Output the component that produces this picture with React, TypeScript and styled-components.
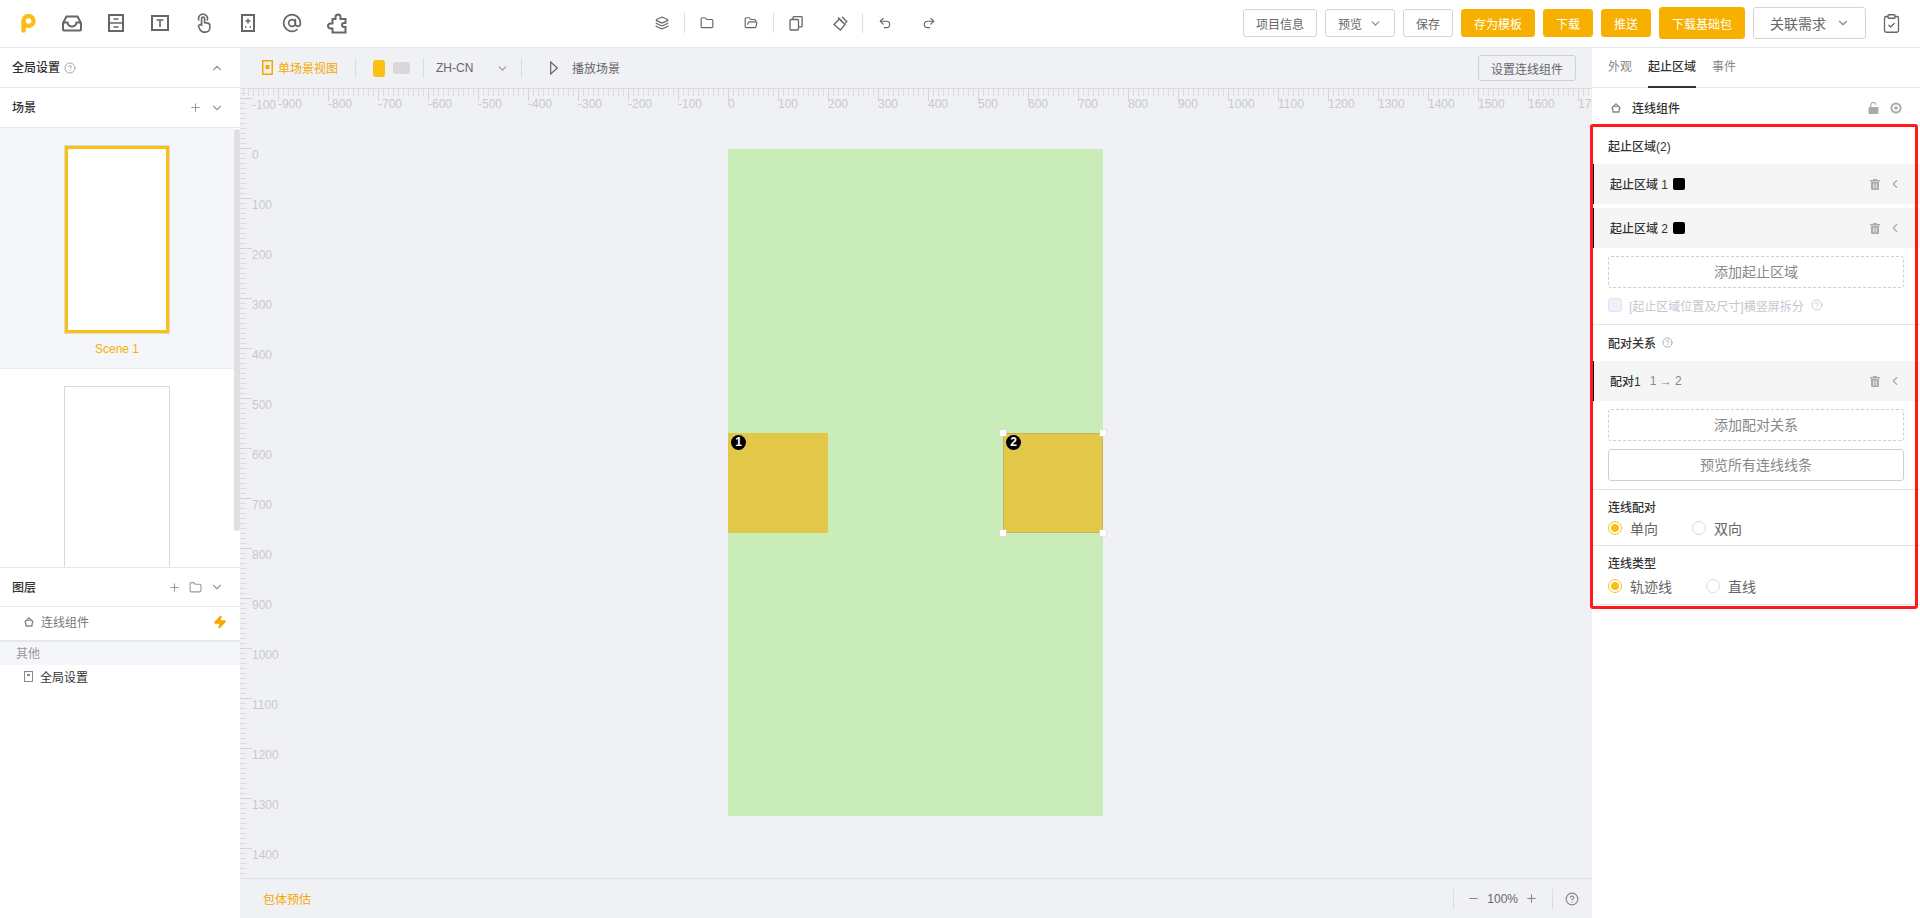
import styled, { createGlobalStyle } from "styled-components";
import {
  AtSign,
  ChevronDown,
  ChevronLeft,
  ChevronUp,
  CircleHelp,
  ClipboardCheck,
  Folder,
  FolderOpen,
  Layers,
  Minus,
  Plus,
  Redo2,
  Undo2,
  Zap,
} from "lucide-react";

const FONT = `"Liberation Sans", "Noto Sans CJK SC", sans-serif`;

const GlobalStyle = createGlobalStyle`
  html, body {
    margin: 0;
    padding: 0;
    height: 100%;
    overflow: hidden;
    background: #fff;
  }
  * { box-sizing: border-box; }
  #root {
    height: 100%;
    font-family: ${FONT};
    font-size: 12px;
    color: #333;
  }
`;

const Page = styled.div`
  width: 1920px;
  height: 918px;
  display: flex;
  flex-direction: column;
  overflow: hidden;
`;

/* top bar */
const TopBar = styled.header`
  height: 48px;
  flex: none;
  display: flex;
  align-items: center;
  padding: 0 18px 1px 6px;
  border-bottom: 1px solid #e6e7ea;
  background: #fff;
`;

const ToolGroup = styled.div`
  display: flex;
  align-items: center;
`;

const CenterTools = styled(ToolGroup)`
  margin-left: 282px;
`;

const ToolSlot = styled.div<{ $wide?: boolean; $divided?: boolean }>`
  position: relative;
  width: ${(p) => (p.$wide ? "44px" : "44.5px")};
  height: 24px;
  display: flex;
  align-items: center;
  justify-content: center;
  color: #666;
  &::after {
    content: "";
    display: ${(p) => (p.$divided ? "block" : "none")};
    position: absolute;
    right: 0;
    top: 2px;
    bottom: 2px;
    width: 1px;
    background: #dcdde0;
  }
`;

const TopActions = styled.div`
  margin-left: auto;
  display: flex;
  align-items: center;
  gap: 8px;
`;

const Btn = styled.button<{ $primary?: boolean; $big?: boolean }>`
  height: ${(p) => (p.$big ? "32px" : "28px")};
  padding: 0 12px;
  display: flex;
  align-items: center;
  gap: 7px;
  font-family: ${FONT};
  font-size: 12px;
  border-radius: 3px;
  cursor: pointer;
  border: 1px solid ${(p) => (p.$primary ? "#f7b000" : "#d4d4d4")};
  background: ${(p) => (p.$primary ? "#f7b000" : "#fff")};
  color: ${(p) => (p.$primary ? "#fff" : "#666")};
  svg {
    color: #888;
  }
`;

const SelectBtn = styled(Btn)`
  width: 113px;
  height: 32px;
  padding: 0 15px 0 16px;
  font-size: 14px;
  justify-content: space-between;
`;

const ClipSlot = styled.div`
  margin-left: 15px;
  display: flex;
  color: #666;
`;

const Body = styled.div`
  flex: 1;
  min-height: 0;
  display: flex;
`;

/* left panel */
const LeftPanel = styled.aside`
  width: 240px;
  flex: none;
  display: flex;
  flex-direction: column;
  background: #fff;
`;

const PanelHead = styled.div<{ $h?: number }>`
  height: ${(p) => p.$h ?? 40}px;
  flex: none;
  display: flex;
  align-items: center;
  padding: 0 16px 0 12px;
  border-bottom: 1px solid #e6e7ea;
  color: #999;
`;

const HeadTitle = styled.span`
  font-size: 12px;
  font-weight: 500;
  color: #333;
  margin: 0 4px 2px 0;
`;

const HeadActions = styled.div`
  margin-left: auto;
  display: flex;
  align-items: center;
  gap: 8px;
`;

const SceneList = styled.div`
  position: relative;
  height: 440px;
  flex: none;
  overflow: hidden;
  padding-right: 6px;
  border-bottom: 1px solid #e6e7ea;
`;

const SceneScroll = styled.div`
  position: absolute;
  top: 1px;
  right: 0;
  width: 6px;
  height: 402px;
  border-radius: 3px;
  background: #dfdfe4;
`;

const SceneItem = styled.div<{ $active?: boolean }>`
  height: 241px;
  padding-top: 17px;
  display: flex;
  flex-direction: column;
  align-items: center;
  background: ${(p) => (p.$active ? "#f5f6fa" : "#fff")};
  border-bottom: 1px solid #ececef;
`;

const SceneThumb = styled.div<{ $active?: boolean }>`
  width: 106px;
  height: 189px;
  flex: none;
  background: #fff;
  border: 1px solid #d9d9d9;
  box-shadow: ${(p) => (p.$active ? "inset 0 0 0 3px #fac014" : "none")};
`;

const SceneName = styled.div`
  margin-top: 8px;
  font-size: 12px;
  line-height: 14px;
  color: #f7b000;
`;

const LayerRow = styled.div<{ $border?: boolean; $h: number; $dark?: boolean }>`
  height: ${(p) => p.$h}px;
  flex: none;
  display: flex;
  align-items: center;
  padding: 0 13px ${(p) => (p.$dark ? 6 : 4)}px 24px;
  gap: 7px;
  color: ${(p) => (p.$dark ? "#333" : "#777")};
  border-bottom: ${(p) => (p.$border ? "2px solid #e6e7ea" : "none")};
`;

const OtherLabel = styled.div`
  height: 23px;
  flex: none;
  display: flex;
  align-items: center;
  padding: 0 0 2px 16px;
  color: #999;
  background: #f5f6fa;
`;

/* canvas */
const CanvasCol = styled.main`
  flex: 1;
  min-width: 0;
  display: flex;
  flex-direction: column;
  background: #f0f1f5;
`;

const CanvasBar = styled.div`
  height: 40px;
  flex: none;
  display: flex;
  align-items: center;
  padding: 0 16px 0 22px;
`;

const ViewTab = styled.div`
  display: flex;
  align-items: center;
  gap: 5px;
  color: #f7a800;
  margin-bottom: 1px;
`;

const VDivider = styled.div<{ $ml: number; $mr: number }>`
  width: 1px;
  height: 20px;
  margin: 0 ${(p) => p.$mr}px 0 ${(p) => p.$ml}px;
  background: #dcdde0;
`;

const OrientA = styled.div`
  width: 12px;
  height: 17px;
  border-radius: 3px;
  background: #fac014;
`;

const OrientB = styled.div`
  width: 17px;
  height: 12px;
  margin-left: 8px;
  border-radius: 3px;
  background: #d8d8d8;
`;

const BarText = styled.span`
  color: #666;
`;

const LangSelect = styled.div`
  display: flex;
  align-items: center;
  width: 73px;
  justify-content: space-between;
  color: #666;
  svg {
    color: #999;
  }
`;

const PlayBtn = styled.div`
  display: flex;
  align-items: center;
  gap: 14px;
  margin-left: 1px;
  color: #666;
  margin-bottom: 1px;
`;

const OutlineBtn = styled.button`
  margin-left: auto;
  width: 98px;
  height: 26px;
  padding: 0;
  font-family: ${FONT};
  font-size: 12px;
  color: #666;
  background: transparent;
  border: 1px solid #cfd0d3;
  border-radius: 3px;
`;

const Stage = styled.div`
  position: relative;
  flex: 1;
  min-height: 0;
  overflow: hidden;
`;

const RulerX = styled.div`
  position: absolute;
  top: 0;
  left: 0;
  right: 0;
  height: 24px;
  display: flex;
  padding-left: 38px;
  border-top: 1px solid #dcdcdf;
  background: repeating-linear-gradient(
      to right,
      #dcdcdf 0 1px,
      transparent 1px 5px
    )
    3px 0 / 100% 7px no-repeat;
`;

const XCell = styled.div`
  width: 50px;
  flex: none;
  height: 12px;
  border-left: 1px solid #d4d4d6;
  position: relative;
`;

const XLabel = styled.span`
  position: absolute;
  left: -1px;
  top: 9px;
  font-size: 12px;
  line-height: 12px;
  color: #c9c9cb;
  white-space: nowrap;
`;

const RulerY = styled.div`
  position: absolute;
  top: 0;
  left: 0;
  bottom: 0;
  width: 12px;
  padding-top: 10px;
  background: repeating-linear-gradient(
      to bottom,
      #dcdcdf 0 1px,
      transparent 1px 5px
    )
    0 0 / 6px 100% no-repeat;
`;

const YCell = styled.div`
  height: 50px;
  width: 12px;
  border-top: 1px solid #d4d4d6;
  position: relative;
`;

const YLabel = styled.span`
  position: absolute;
  left: 12px;
  top: 0;
  font-size: 12px;
  line-height: 12px;
  color: #c9c9cb;
  white-space: nowrap;
`;

const Artboard = styled.div`
  position: absolute;
  left: 488px;
  top: 61px;
  width: 375px;
  height: 667px;
  background: #caecb8;
`;

const Zone = styled.div<{ $x: number; $selected?: boolean }>`
  position: absolute;
  left: ${(p) => p.$x}px;
  top: 284px;
  width: 100px;
  height: 100px;
  background: #e2c749;
  box-shadow: ${(p) => (p.$selected ? "inset 0 0 0 1px rgba(170, 170, 110, 0.55)" : "none")};
`;

const ZoneBadge = styled.span`
  position: absolute;
  left: 3px;
  top: 2px;
  width: 15px;
  height: 15px;
  border-radius: 50%;
  background: #000;
  color: #fff;
  font-size: 12px;
  font-weight: 700;
  line-height: 15px;
  text-align: center;
`;

const Handle = styled.i<{ $x: "left" | "right"; $y: "top" | "bottom" }>`
  position: absolute;
  ${(p) => p.$x}: -3px;
  ${(p) => p.$y}: -3px;
  width: 6px;
  height: 6px;
  background: #fff;
  box-shadow: 0 0 0 0.5px #d8d8d0;
`;

const CanvasFoot = styled.footer`
  height: 40px;
  flex: none;
  display: flex;
  align-items: center;
  padding: 0 13px 0 23px;
  border-top: 1px solid #e0e1e4;
  color: #666;
`;

const FootLink = styled.span`
  color: #f7a800;
`;

const ZoomBox = styled.div`
  margin-left: auto;
  display: flex;
  align-items: center;
  color: #888;
`;

const ZoomValue = styled.span`
  color: #666;
  margin: 0 7px;
`;

/* right panel */
const RightPanel = styled.aside`
  width: 328px;
  flex: none;
  display: flex;
  flex-direction: column;
  background: #fff;
`;

const Tabs = styled.div`
  height: 40px;
  flex: none;
  display: flex;
  gap: 16px;
  padding-left: 16px;
  border-bottom: 1px solid #e6e7ea;
`;

const Tab = styled.div<{ $active?: boolean }>`
  height: 40px;
  padding-top: 10px;
  line-height: 18px;
  font-weight: ${(p) => (p.$active ? 500 : 400)};
  color: ${(p) => (p.$active ? "#333" : "#888")};
  border-bottom: 2px solid ${(p) => (p.$active ? "#333" : "transparent")};
`;

const CompRow = styled.div`
  height: 36px;
  flex: none;
  display: flex;
  align-items: center;
  padding: 3px 18px 0 19px;
  gap: 11px;
  color: #999;
`;

const CompName = styled.span`
  font-weight: 500;
  color: #333;
`;

const CompActions = styled.div`
  margin-left: auto;
  display: flex;
  align-items: center;
  gap: 11px;
`;

const FormArea = styled.div`
  position: relative;
  flex: 1;
`;

const RedFrame = styled.div`
  position: absolute;
  left: -2px;
  top: 0;
  width: 328px;
  height: 485px;
  border: 3px solid #ff1a1a;
  border-radius: 3px;
  pointer-events: none;
  z-index: 2;
`;

const Section = styled.section<{ $pb: number }>`
  padding-bottom: ${(p) => p.$pb}px;
  border-bottom: 1px solid #e4e5ea;
`;

const SectionTitle = styled.div<{ $h: number; $pt?: number }>`
  height: ${(p) => p.$h}px;
  padding: ${(p) => p.$pt ?? 0}px 16px 2px;
  display: flex;
  align-items: center;
  gap: 6px;
  font-weight: 500;
  color: #333;
  svg {
    color: #aaa;
  }
`;

const ListRow = styled.div`
  height: 40px;
  margin-bottom: 4px;
  display: flex;
  align-items: center;
  padding: 0 18px 0 16px;
  background: #f5f5f5;
  border-left: 2px solid #000;
`;

const RowName = styled.span`
  font-weight: 500;
  color: #333;
  margin-bottom: 2px;
`;

const Swatch = styled.span`
  width: 12px;
  height: 12px;
  margin-left: 5px;
  border-radius: 2px;
  background: #000;
`;

const PairInfo = styled.span`
  margin-left: 9px;
  color: #888;
  display: flex;
  align-items: center;
  gap: 2px;
  margin-bottom: 1px;
`;

const RowActions = styled.div`
  margin-left: auto;
  display: flex;
  align-items: center;
  gap: 8px;
  color: #aaa;
`;

const WideBtn = styled.button<{ $dashed?: boolean }>`
  display: block;
  width: 296px;
  height: 32px;
  margin: 8px 0 0 16px;
  padding: 0 0 2px;
  font-family: ${FONT};
  font-size: 14px;
  color: #888;
  background: #fff;
  border: 1px ${(p) => (p.$dashed ? "dashed" : "solid")} #cfcfcf;
  border-radius: 3px;
`;

const CheckRow = styled.label`
  margin: 10px 0 0 16px;
  height: 14px;
  display: flex;
  align-items: center;
  gap: 7px;
  color: #c3c6cf;
`;

const CheckBox = styled.span`
  width: 14px;
  height: 14px;
  border: 1px solid #dfe3ee;
  border-radius: 3px;
  background: #eef1fa;
`;

const FieldLabel = styled.div`
  padding: 8px 16px 0;
  line-height: 20px;
  font-weight: 500;
  color: #333;
`;

const RadioRow = styled.div<{ $mt: number }>`
  margin-top: ${(p) => p.$mt}px;
  height: 20px;
  padding-left: 16px;
  display: flex;
  align-items: center;
`;

const RadioItem = styled.span`
  display: flex;
  align-items: center;
  gap: 8px;
  margin-right: 34px;
  font-size: 14px;
  color: #666;
`;

const RadioDot = styled.span<{ $on?: boolean }>`
  width: 14px;
  height: 14px;
  border-radius: 50%;
  background: #fff;
  border: 1px solid ${(p) => (p.$on ? "#fac014" : "#dcdcdc")};
  display: flex;
  align-items: center;
  justify-content: center;
  &::after {
    content: "";
    display: ${(p) => (p.$on ? "block" : "none")};
    width: 8px;
    height: 8px;
    border-radius: 50%;
    background: #fac014;
  }
`;

/* drawn icons */
const Logo = () => (
  <svg width="15" height="19" viewBox="0 0 15 19" fill="none">
    <circle cx="7.5" cy="7" r="5" stroke="#fbbd18" strokeWidth="4.4" />
    <path d="M2.6 7v9.4" stroke="#fbbd18" strokeWidth="4.6" strokeLinecap="round" />
  </svg>
);

const InboxIcon = () => (
  <svg width="20" height="17" viewBox="0 0 20 17" fill="none" stroke="currentColor" strokeWidth="2">
    <path d="M4.5 1.5h11L19 8v6.500a1 1 0 0 1-1 1H2a1 1 0 0 1-1-1V8z" />
    <path d="M1 7.500h4.500c.5 2.500 2.300 4 4.500 4s4-1.500 4.500-4H19" />
  </svg>
);

const CabinetIcon = () => (
  <svg width="16" height="18" viewBox="0 0 16 18" fill="none" stroke="currentColor" strokeWidth="2">
    <rect x="1" y="1" width="14" height="16" />
    <path d="M1 9h14M5.500 5h5M5.500 13h5" strokeWidth="1.600" />
  </svg>
);

const TextBoxIcon = () => (
  <svg width="18" height="16" viewBox="0 0 18 16" fill="none" stroke="currentColor" strokeWidth="2">
    <rect x="1" y="1" width="16" height="14" />
    <path d="M5.500 5h7M9 5v7" strokeWidth="1.600" />
  </svg>
);

const TouchIcon = () => (
  <svg width="14" height="20" viewBox="0 0 14 20" fill="none" stroke="currentColor" strokeWidth="1.600">
    <path d="M2 7.500a4.500 4.500 0 1 1 8 0" />
    <path d="M4.600 12V5.500a1.500 1.500 0 0 1 3 0v4l3 .6a2.500 2.500 0 0 1 2.200 2.500v2.200a4.300 4.300 0 0 1-4.300 4.300h-1A4.300 4.300 0 0 1 3 16.500L1.500 13.300c-.4-1 1.800-2.300 3.100-1.300z" />
  </svg>
);

const DeviceIcon = () => (
  <svg width="14" height="18" viewBox="0 0 14 18" fill="none" stroke="currentColor" strokeWidth="2">
    <rect x="1" y="1" width="12" height="16" />
    <path d="M7 4.500v5M4.500 7h5" strokeWidth="1.500" />
    <path d="M4 13h1.500M8.500 13H10" strokeWidth="1.500" />
  </svg>
);

const PuzzleIcon = () => (
  <svg width="21" height="21" viewBox="0 0 21 21" fill="none" stroke="currentColor" strokeWidth="2">
    <path d="M6.500 6h3V4a2.500 2.500 0 0 1 5 0v2h5v4h-1.500a2 2 0 0 0 0 4h1.500v5.500h-13V15.500h-2a2.500 2.500 0 0 1 0-5h2z" />
  </svg>
);

const CopyIcon = () => (
  <svg width="14" height="15" viewBox="0 0 14 15" fill="none" stroke="currentColor" strokeWidth="1.300">
    <rect x="1" y="3.500" width="8.500" height="10.500" rx="1" />
    <path d="M4 3.500V1.500a.8.8 0 0 1 .8-.8h7.500a.8.8 0 0 1 .8.8V10a.8.8 0 0 1-.8.8H9.500" />
  </svg>
);

const BrushIcon = () => (
  <svg width="15" height="15" viewBox="0 0 15 15" fill="none" stroke="currentColor" strokeWidth="1.300">
    <path d="M1 8.500 6.500 3l5.500 5.500L7.500 14z" />
    <path d="M5 1.500 9.500 6M9 .8l4.800 4.800-2 2" />
  </svg>
);

const SceneViewIcon = () => (
  <svg width="11" height="15" viewBox="0 0 11 15" fill="none" stroke="#f7a800" strokeWidth="1.500">
    <rect x=".75" y=".75" width="9.500" height="13.500" />
    <rect x="3.500" y="5" width="4" height="4" fill="#f7a800" stroke="none" />
  </svg>
);

const PlayIcon = () => (
  <svg width="8" height="14" viewBox="0 0 8 14" fill="none" stroke="#666" strokeWidth="1.200">
    <path d="M.7 1v12L7.300 7z" />
  </svg>
);

const LinkIcon = () => (
  <svg width="10" height="10" viewBox="0 0 10 10" fill="none" stroke="#888" strokeWidth="1.400">
    <path d="M5 1 8.800 4.500 7.800 9H2.200L1.200 4.500z" />
    <path d="M3.500 3.500h3" strokeWidth="1" />
  </svg>
);

const PageIcon = () => (
  <svg width="9" height="11" viewBox="0 0 9 11" fill="none" stroke="#888" strokeWidth="1">
    <rect x=".5" y=".5" width="8" height="10" />
    <rect x="3" y="3" width="3" height="2" fill="#888" stroke="none" />
  </svg>
);

const TrashIcon = () => (
  <svg width="10" height="11" viewBox="0 0 10 11" fill="currentColor">
    <rect x="3" y="0" width="4" height="1.500" />
    <rect x="0" y="1" width="10" height="1.500" />
    <path d="M1 3h8v7a1 1 0 0 1-1 1H2a1 1 0 0 1-1-1zM3.300 4.500v5h1v-5zM5.700 4.500v5h1v-5z" fillRule="evenodd" />
  </svg>
);

const LockIcon = () => (
  <svg width="11" height="12" viewBox="0 0 11 12" fill="none">
    <path d="M2.800 5V3.200a2.500 2.500 0 0 1 5-.4" stroke="#aaa" strokeWidth="1.200" />
    <rect x=".5" y="5" width="10" height="7" rx="1" fill="#aaa" />
  </svg>
);

const EyeIcon = () => (
  <svg width="12" height="12" viewBox="0 0 12 12" fill="none">
    <circle cx="6" cy="6" r="4.600" stroke="#aaa" strokeWidth="2" />
    <circle cx="6" cy="6" r="1.800" fill="#aaa" />
  </svg>
);

const X_LABELS = Array.from({ length: 27 }, (_, i) => -900 + i * 100);
const Y_LABELS = Array.from({ length: 17 }, (_, i) => -100 + i * 100);

export default function App() {
  return (
    <Page>
      <GlobalStyle />
      <TopBar>
        <ToolGroup>
          <ToolSlot $wide><Logo /></ToolSlot>
          <ToolSlot $wide><InboxIcon /></ToolSlot>
          <ToolSlot $wide><CabinetIcon /></ToolSlot>
          <ToolSlot $wide><TextBoxIcon /></ToolSlot>
          <ToolSlot $wide><TouchIcon /></ToolSlot>
          <ToolSlot $wide><DeviceIcon /></ToolSlot>
          <ToolSlot $wide><AtSign size={20} strokeWidth={2} /></ToolSlot>
          <ToolSlot $wide><PuzzleIcon /></ToolSlot>
        </ToolGroup>
        <CenterTools>
          <ToolSlot $divided><Layers size={14} /></ToolSlot>
          <ToolSlot><Folder size={14} /></ToolSlot>
          <ToolSlot $divided><FolderOpen size={14} /></ToolSlot>
          <ToolSlot><CopyIcon /></ToolSlot>
          <ToolSlot $divided><BrushIcon /></ToolSlot>
          <ToolSlot><Undo2 size={14} /></ToolSlot>
          <ToolSlot><Redo2 size={14} /></ToolSlot>
        </CenterTools>
        <TopActions>
          <Btn>项目信息</Btn>
          <Btn>预览<ChevronDown size={13} /></Btn>
          <Btn>保存</Btn>
          <Btn $primary>存为模板</Btn>
          <Btn $primary>下载</Btn>
          <Btn $primary>推送</Btn>
          <Btn $primary $big>下载基础包</Btn>
          <SelectBtn>关联需求<ChevronDown size={14} /></SelectBtn>
        </TopActions>
        <ClipSlot><ClipboardCheck size={21} strokeWidth={1.5} /></ClipSlot>
      </TopBar>

      <Body>
        <LeftPanel>
          <PanelHead>
            <HeadTitle>全局设置</HeadTitle>
            <CircleHelp size={12} color="#aaa" />
            <HeadActions><ChevronUp size={14} /></HeadActions>
          </PanelHead>
          <PanelHead>
            <HeadTitle>场景</HeadTitle>
            <HeadActions><Plus size={13} /><ChevronDown size={14} /></HeadActions>
          </PanelHead>
          <SceneList>
            <SceneScroll />
            <SceneItem $active>
              <SceneThumb $active />
              <SceneName>Scene 1</SceneName>
            </SceneItem>
            <SceneItem>
              <SceneThumb />
            </SceneItem>
          </SceneList>
          <PanelHead $h={39}>
            <HeadTitle>图层</HeadTitle>
            <HeadActions><Plus size={13} /><Folder size={13} /><ChevronDown size={14} /></HeadActions>
          </PanelHead>
          <LayerRow $h={35} $border>
            <LinkIcon />
            <span>连线组件</span>
            <HeadActions><Zap size={14} color="#f7a800" fill="#f7a800" /></HeadActions>
          </LayerRow>
          <OtherLabel>其他</OtherLabel>
          <LayerRow $h={28} $dark>
            <PageIcon />
            <span>全局设置</span>
          </LayerRow>
        </LeftPanel>

        <CanvasCol>
          <CanvasBar>
            <ViewTab><SceneViewIcon />单场景视图</ViewTab>
            <VDivider $ml={17} $mr={17} />
            <OrientA />
            <OrientB />
            <VDivider $ml={13} $mr={12} />
            <LangSelect>ZH-CN<ChevronDown size={13} /></LangSelect>
            <VDivider $ml={12} $mr={27} />
            <PlayBtn><PlayIcon /><BarText>播放场景</BarText></PlayBtn>
            <OutlineBtn>设置连线组件</OutlineBtn>
          </CanvasBar>
          <Stage>
            <RulerX>
              {X_LABELS.map((n) => (
                <XCell key={n}><XLabel>{n}</XLabel></XCell>
              ))}
            </RulerX>
            <RulerY>
              {Y_LABELS.map((n) => (
                <YCell key={n}><YLabel>{n}</YLabel></YCell>
              ))}
            </RulerY>
            <Artboard>
              <Zone $x={0}><ZoneBadge>1</ZoneBadge></Zone>
              <Zone $x={275} $selected>
                <ZoneBadge>2</ZoneBadge>
                <Handle $x="left" $y="top" />
                <Handle $x="right" $y="top" />
                <Handle $x="left" $y="bottom" />
                <Handle $x="right" $y="bottom" />
              </Zone>
            </Artboard>
          </Stage>
          <CanvasFoot>
            <FootLink>包体预估</FootLink>
            <ZoomBox>
              <VDivider $ml={0} $mr={13} />
              <Minus size={13} />
              <ZoomValue>100%</ZoomValue>
              <Plus size={13} />
              <VDivider $ml={14} $mr={12} />
              <CircleHelp size={14} />
            </ZoomBox>
          </CanvasFoot>
        </CanvasCol>

        <RightPanel>
          <Tabs>
            <Tab>外观</Tab>
            <Tab $active>起止区域</Tab>
            <Tab>事件</Tab>
          </Tabs>
          <CompRow>
            <LinkIcon />
            <CompName>连线组件</CompName>
            <CompActions><LockIcon /><EyeIcon /></CompActions>
          </CompRow>
          <FormArea>
            <RedFrame />
            <Section $pb={12}>
              <SectionTitle $h={40} $pt={4}>起止区域(2)</SectionTitle>
              <ListRow>
                <RowName>起止区域 1</RowName>
                <Swatch />
                <RowActions><TrashIcon /><ChevronLeft size={14} /></RowActions>
              </ListRow>
              <ListRow>
                <RowName>起止区域 2</RowName>
                <Swatch />
                <RowActions><TrashIcon /><ChevronLeft size={14} /></RowActions>
              </ListRow>
              <WideBtn $dashed>添加起止区域</WideBtn>
              <CheckRow>
                <CheckBox />
                <span>[起止区域位置及尺寸]横竖屏拆分</span>
                <CircleHelp size={12} color="#c9ccd4" />
              </CheckRow>
            </Section>
            <Section $pb={8}>
              <SectionTitle $h={36}>配对关系<CircleHelp size={11} /></SectionTitle>
              <ListRow>
                <RowName>配对1</RowName>
                <PairInfo>1 → 2</PairInfo>
                <RowActions><TrashIcon /><ChevronLeft size={14} /></RowActions>
              </ListRow>
              <WideBtn $dashed>添加配对关系</WideBtn>
              <WideBtn>预览所有连线线条</WideBtn>
            </Section>
            <Section $pb={7}>
              <FieldLabel>连线配对</FieldLabel>
              <RadioRow $mt={0}>
                <RadioItem><RadioDot $on />单向</RadioItem>
                <RadioItem><RadioDot />双向</RadioItem>
              </RadioRow>
            </Section>
            <Section $pb={8}>
              <FieldLabel>连线类型</FieldLabel>
              <RadioRow $mt={2}>
                <RadioItem><RadioDot $on />轨迹线</RadioItem>
                <RadioItem><RadioDot />直线</RadioItem>
              </RadioRow>
            </Section>
          </FormArea>
        </RightPanel>
      </Body>
    </Page>
  );
}
